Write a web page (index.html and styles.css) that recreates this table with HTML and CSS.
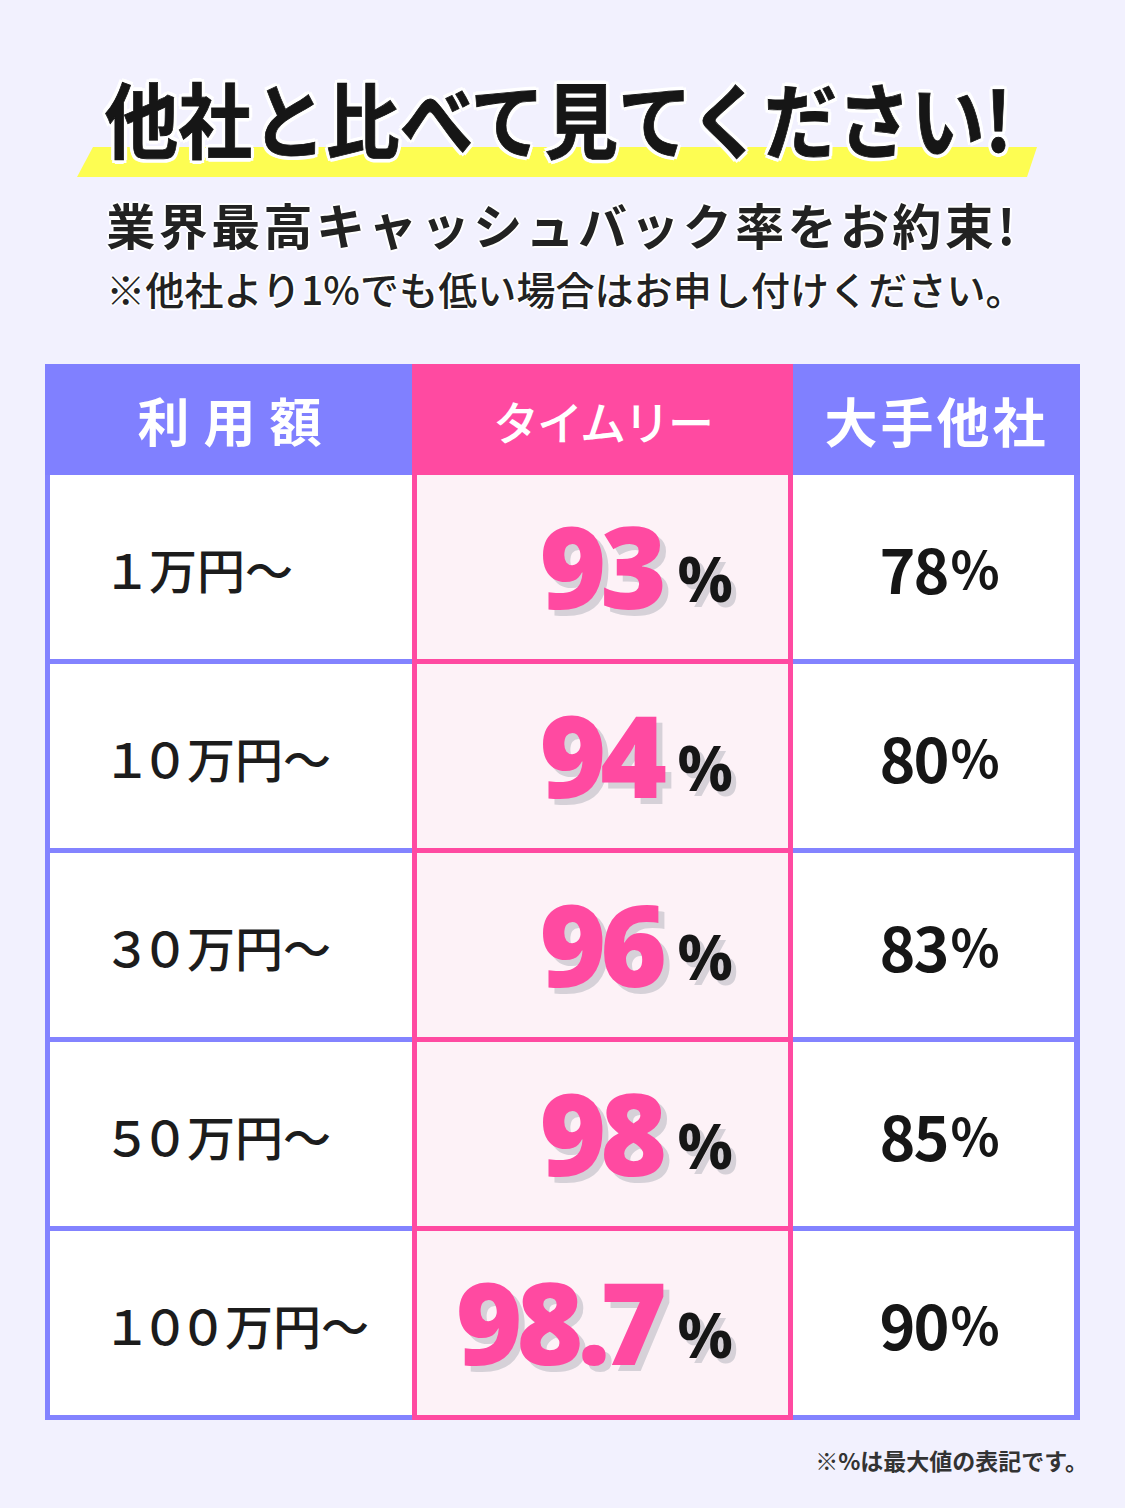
FILE: index.html
```html
<!DOCTYPE html>
<html lang="ja">
<head>
<meta charset="utf-8">
<title>キャッシュバック率比較</title>
<link rel="stylesheet" href="styles.css">
</head>
<body>
<div class="page">
  <header class="hero">
    <div class="headline">
      <h1 class="headline-text">他社と比べて見てください!</h1>
    </div>
    <p class="lead">業界最高キャッシュバック率をお約束!</p>
    <p class="sub">※他社より1%でも低い場合はお申し付けください。</p>
  </header>

  <div class="table">
    <div class="col col-amount">
      <div class="th th-amount">利用額</div>
      <div class="cells">
        <div class="td td-amount"><span class="digits">１</span>万円～</div>
        <div class="td td-amount"><span class="digits">１０</span>万円～</div>
        <div class="td td-amount"><span class="digits">３０</span>万円～</div>
        <div class="td td-amount"><span class="digits">５０</span>万円～</div>
        <div class="td td-amount"><span class="digits">１００</span>万円～</div>
      </div>
    </div>
    <div class="col col-ours">
      <div class="th th-ours">タイムリー</div>
      <div class="cells">
        <div class="td td-ours"><span class="val"><span class="big">93</span><span class="pct">%</span></span></div>
        <div class="td td-ours"><span class="val"><span class="big">94</span><span class="pct">%</span></span></div>
        <div class="td td-ours"><span class="val"><span class="big">96</span><span class="pct">%</span></span></div>
        <div class="td td-ours"><span class="val"><span class="big">98</span><span class="pct">%</span></span></div>
        <div class="td td-ours"><span class="val"><span class="big">98<span class="dot">.</span>7</span><span class="pct">%</span></span></div>
      </div>
    </div>
    <div class="col col-other">
      <div class="th th-other">大手他社</div>
      <div class="cells">
        <div class="td td-other">78<span class="opct">%</span></div>
        <div class="td td-other">80<span class="opct">%</span></div>
        <div class="td td-other">83<span class="opct">%</span></div>
        <div class="td td-other">85<span class="opct">%</span></div>
        <div class="td td-other">90<span class="opct">%</span></div>
      </div>
    </div>
  </div>

  <p class="foot">※%は最大値の表記です。</p>
</div>
</body>
</html>
```

FILE: styles.css
```css
* { box-sizing: border-box; }

html, body {
  margin: 0;
  padding: 0;
  background: #f2f1fe;
}

body {
  font-family: "Noto Sans CJK JP", "Noto Sans", sans-serif;
  color: #1c1c1c;
}

.page {
  width: 1125px;
  height: 1508px;
  padding: 0 45px;
  background: #f2f1fe;
  overflow: hidden;
}

/* ---------- hero ---------- */
.hero {
  padding-top: 77px;
  display: flex;
  flex-direction: column;
  align-items: center;
}

.headline {
  position: relative;
  width: 100%;
  height: 80px;
  display: flex;
  justify-content: center;
}

.headline::before {
  content: "";
  position: absolute;
  left: 32px;
  top: 70px;
  width: 960px;
  height: 30px;
  background: #fdfd52;
  clip-path: polygon(16px 0, 100% 0, calc(100% - 10px) 100%, 0 100%);
}

.headline-text {
  position: relative;
  margin: 0 0 0 -8px;
  font-size: 82px;
  line-height: 80px;
  font-weight: 700;
  letter-spacing: 0;
  color: #161616;
  white-space: nowrap;
  transform: scaleX(0.9);
  -webkit-text-stroke: 0.8px #161616;
  text-shadow:
    4px 0 0 #fff, -4px 0 0 #fff, 0 4px 0 #fff, 0 -4px 0 #fff,
    3px 3px 0 #fff, -3px -3px 0 #fff, 3px -3px 0 #fff, -3px 3px 0 #fff;
}

.lead {
  margin: 42px 0 0;
  font-size: 49px;
  line-height: 50px;
  font-weight: 700;
  letter-spacing: 3.4px;
  color: #222;
  white-space: nowrap;
  text-shadow:
    2px 0 0 #fff, -2px 0 0 #fff, 0 2px 0 #fff, 0 -2px 0 #fff;
}

.sub {
  margin: 19px 0 0 6px;
  font-size: 39px;
  line-height: 40px;
  font-weight: 500;
  letter-spacing: 0.1px;
  color: #222;
  white-space: nowrap;
  text-shadow:
    2px 0 0 #fff, -2px 0 0 #fff, 0 2px 0 #fff, 0 -2px 0 #fff;
}

/* ---------- table ---------- */
.table {
  margin-top: 56px;
  display: flex;
}

.col {
  display: flex;
  flex-direction: column;
  padding-bottom: 5px;
}

.col-amount {
  width: 367px;
  background: #8383ff;
  padding-left: 5px;
}

.col-ours {
  width: 381px;
  background: #ff4aa1;
  padding-left: 5px;
  padding-right: 5px;
}

.col-other {
  width: 287px;
  background: #8383ff;
  padding-right: 6px;
}

.th {
  height: 111px;
  display: flex;
  align-items: center;
  justify-content: center;
  color: #fff;
  font-weight: 700;
  white-space: nowrap;
}

.th-amount {
  background: #8080ff;
  margin-left: -5px;
  font-size: 52px;
  letter-spacing: 14px;
  padding-left: 16px;
}

.th-ours {
  background: #ff4aa1;
  margin: 0 -5px;
  font-size: 46px;
  font-weight: 500;
  letter-spacing: -2px;
}

.th-other {
  background: #8080ff;
  margin-right: -6px;
  font-size: 53px;
  letter-spacing: 3px;
}

.cells {
  display: flex;
  flex-direction: column;
  gap: 5px;
}

.td {
  height: 184px;
  display: flex;
  align-items: center;
  background: #fff;
}

.td-amount {
  padding-left: 53px;
  padding-top: 2px;
  font-size: 48px;
  font-weight: 500;
  color: #1c1c1c;
  white-space: nowrap;
}

.digits {
  letter-spacing: -10px;
  margin-right: 8px;
}

.td-ours {
  background: #fdf2f7;
  justify-content: flex-end;
  padding-right: 55px;
  padding-top: 34px;
  font-family: "Open Sans", "Noto Sans", sans-serif;
}

.val {
  line-height: 120px;
  white-space: nowrap;
}

.big {
  font-size: 114px;
  font-weight: 800;
  letter-spacing: -6px;
  color: #ff4aa1;
  text-shadow: 6px 6px 0 #d6d1d8;
}

.dot {
  letter-spacing: -10px;
}

.pct {
  margin-left: 16px;
  font-size: 62px;
  font-weight: 700;
  vertical-align: 7px;
  color: #161616;
  text-shadow: 5px 5px 0 #d6d1d8;
}

.td-other {
  justify-content: center;
  padding-left: 12px;
  padding-top: 0;
  font-family: "Noto Sans CJK JP", "Noto Sans", sans-serif;
  font-size: 61px;
  font-weight: 700;
  letter-spacing: -2px;
  color: #161616;
}

.opct {
  font-size: 51px;
  font-weight: 700;
  letter-spacing: 0;
  margin-left: 3px;
}

/* ---------- footnote ---------- */
.foot {
  margin: 27px -8px 0 0;
  text-align: right;
  font-size: 23px;
  line-height: 26px;
  font-weight: 700;
  color: #333;
}
```
